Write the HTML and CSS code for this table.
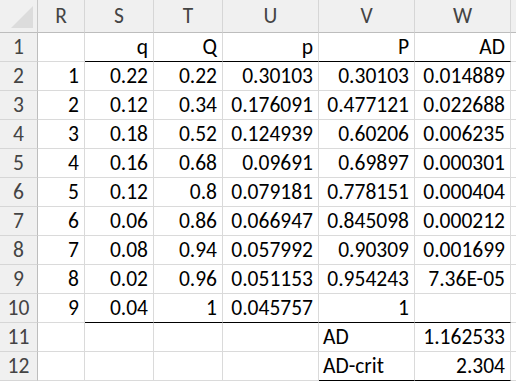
FILE: index.html
```html
<!DOCTYPE html>
<html lang="en">

<head>
    <meta charset="UTF-8">
    <meta name="viewport" content="width=device-width, initial-scale=1.0">
    <title>AD test</title>
    <link rel="stylesheet" href="styles.css">
</head>

<body>

    <div class="sheet">
        <!-- column headers -->
        <div class="corner"><span class="tri"></span></div>
        <div class="col-hd">R</div>
        <div class="col-hd">S</div>
        <div class="col-hd">T</div>
        <div class="col-hd">U</div>
        <div class="col-hd">V</div>
        <div class="col-hd">W</div>
        <div class="col-hd rest"></div>

        <div class="row-hd">1</div>
        <div class="cell"></div>
        <div class="cell bb">q</div>
        <div class="cell bb">Q</div>
        <div class="cell bb">p</div>
        <div class="cell bb">P</div>
        <div class="cell bb">AD</div>
        <div class="cell rest"></div>

        <div class="row-hd">2</div>
        <div class="cell">1</div>
        <div class="cell">0.22</div>
        <div class="cell">0.22</div>
        <div class="cell">0.30103</div>
        <div class="cell">0.30103</div>
        <div class="cell">0.014889</div>
        <div class="cell rest"></div>

        <div class="row-hd">3</div>
        <div class="cell">2</div>
        <div class="cell">0.12</div>
        <div class="cell">0.34</div>
        <div class="cell">0.176091</div>
        <div class="cell">0.477121</div>
        <div class="cell">0.022688</div>
        <div class="cell rest"></div>

        <div class="row-hd">4</div>
        <div class="cell">3</div>
        <div class="cell">0.18</div>
        <div class="cell">0.52</div>
        <div class="cell">0.124939</div>
        <div class="cell">0.60206</div>
        <div class="cell">0.006235</div>
        <div class="cell rest"></div>

        <div class="row-hd">5</div>
        <div class="cell">4</div>
        <div class="cell">0.16</div>
        <div class="cell">0.68</div>
        <div class="cell">0.09691</div>
        <div class="cell">0.69897</div>
        <div class="cell">0.000301</div>
        <div class="cell rest"></div>

        <div class="row-hd">6</div>
        <div class="cell">5</div>
        <div class="cell">0.12</div>
        <div class="cell">0.8</div>
        <div class="cell">0.079181</div>
        <div class="cell">0.778151</div>
        <div class="cell">0.000404</div>
        <div class="cell rest"></div>

        <div class="row-hd">7</div>
        <div class="cell">6</div>
        <div class="cell">0.06</div>
        <div class="cell">0.86</div>
        <div class="cell">0.066947</div>
        <div class="cell">0.845098</div>
        <div class="cell">0.000212</div>
        <div class="cell rest"></div>

        <div class="row-hd">8</div>
        <div class="cell">7</div>
        <div class="cell">0.08</div>
        <div class="cell">0.94</div>
        <div class="cell">0.057992</div>
        <div class="cell">0.90309</div>
        <div class="cell">0.001699</div>
        <div class="cell rest"></div>

        <div class="row-hd">9</div>
        <div class="cell">8</div>
        <div class="cell">0.02</div>
        <div class="cell">0.96</div>
        <div class="cell">0.051153</div>
        <div class="cell">0.954243</div>
        <div class="cell">7.36E-05</div>
        <div class="cell rest"></div>

        <div class="row-hd">10</div>
        <div class="cell">9</div>
        <div class="cell bb">0.04</div>
        <div class="cell bb">1</div>
        <div class="cell bb">0.045757</div>
        <div class="cell bb">1</div>
        <div class="cell bb"></div>
        <div class="cell rest"></div>

        <div class="row-hd">11</div>
        <div class="cell"></div>
        <div class="cell"></div>
        <div class="cell"></div>
        <div class="cell"></div>
        <div class="cell txt">AD</div>
        <div class="cell">1.162533</div>
        <div class="cell rest"></div>

        <div class="row-hd">12</div>
        <div class="cell"></div>
        <div class="cell"></div>
        <div class="cell"></div>
        <div class="cell"></div>
        <div class="cell txt bb">AD-crit</div>
        <div class="cell bb">2.304</div>
        <div class="cell rest"></div>
    </div>

</body>

</html>
```

FILE: styles.css
```css
html,
body {
    margin: 0;
    background: #fff;
}

.sheet {
    display: grid;
    grid-template-columns: 38px 47px 69px 69px 96px 96px 96px 1fr;
    grid-template-rows: 33px repeat(13, 29px);
    width: 516px;
    height: 382px;
    overflow: hidden;
    font-family: Carlito, Lato, "Liberation Sans", sans-serif;
    font-size: 21.5px;
    color: #000;
}

.corner {
    background: #f0f0f0;
    border-right: 1px solid #c8c8c8;
    border-bottom: 1px solid #bdbdbd;
    position: relative;
}

.corner .tri {
    position: absolute;
    right: 4px;
    bottom: 4px;
    width: 0;
    height: 0;
    border-left: 22px solid transparent;
    border-bottom: 22px solid #dcdcdc;
}

.col-hd {
    background: #f0f0f0;
    color: #444;
    text-align: center;
    line-height: 29px;
    padding-top: 2px;
    border-right: 1px solid #d6d6d6;
    border-bottom: 1px solid #bdbdbd;
}

.col-hd.rest {
    border-right: none;
}

.row-hd {
    background: #f0f0f0;
    color: #444;
    text-align: center;
    line-height: 28px;
    border-right: 1px solid #bdbdbd;
    border-bottom: 1px solid #d6d6d6;
}

.cell {
    text-align: right;
    padding: 0 5px 0 4px;
    line-height: 28px;
    white-space: nowrap;
    border-right: 1px solid #dadada;
    border-bottom: 1px solid #dadada;
}

.cell.txt {
    text-align: left;
}

.cell.bb {
    border-bottom-color: #000;
}

.cell.rest {
    border-right: none;
}
```
